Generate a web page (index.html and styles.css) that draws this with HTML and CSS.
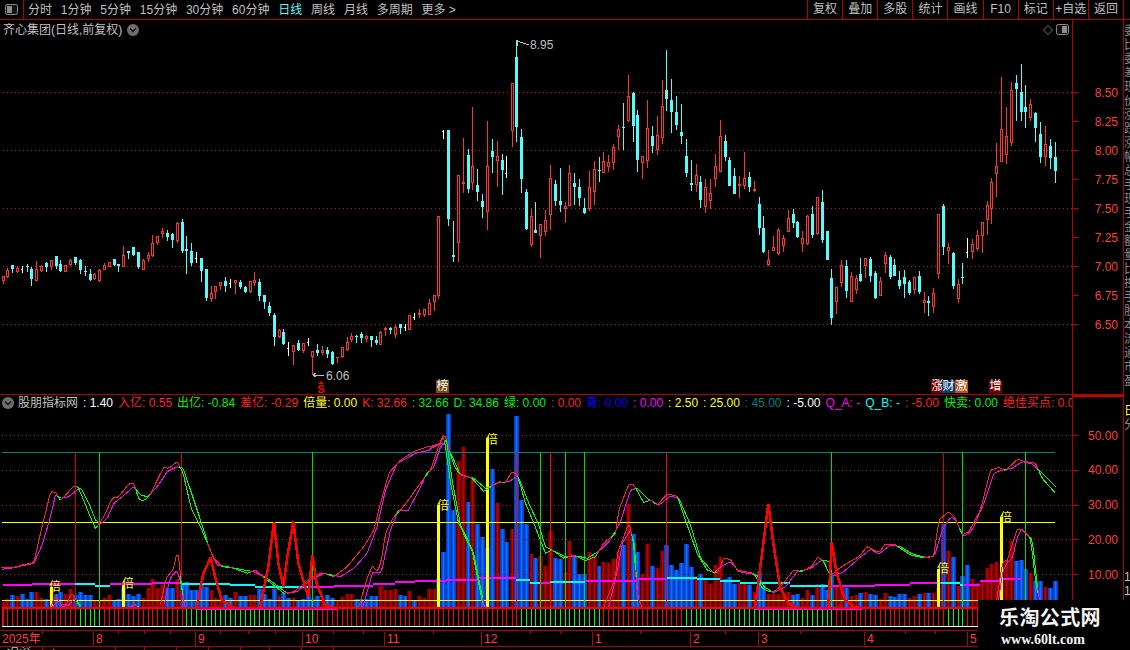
FILE: index.html
```html
<!DOCTYPE html>
<html lang="zh-CN">
<head>
  <meta charset="UTF-8">
  <title>齐心集团 日线</title>
  <link rel="stylesheet" href="styles.css">
</head>
<body>
  <div class="toolbar">
    <div class="layout-btn">
      <svg class="panel-icon" width="13" height="11" viewBox="0 0 13 11">
        <rect x="0.5" y="0.5" width="12" height="10" rx="2" fill="#111" stroke="#8c8c8c"/>
        <rect x="2" y="2" width="5" height="7" fill="#8c8c8c"/>
      </svg>
    </div>
    <div class="periods">
      <span>分时</span>
      <span>1分钟</span>
      <span>5分钟</span>
      <span>15分钟</span>
      <span>30分钟</span>
      <span>60分钟</span>
      <span class="active">日线</span>
      <span>周线</span>
      <span>月线</span>
      <span>多周期</span>
      <span>更多 &gt;</span>
    </div>
    <div class="tools">
      <span>复权</span>
      <span>叠加</span>
      <span>多股</span>
      <span>统计</span>
      <span>画线</span>
      <span>F10</span>
      <span>标记</span>
      <span>+自选</span>
      <span>返回</span>
    </div>
  </div>

  <div class="workspace">
    <div class="charts">
      <div class="pane pane-price">
        <div class="chart-area">
          <svg id="priceChart" class="chart" width="1072" height="374" viewBox="0 20 1072 374"></svg>
          <div class="pane-title">
            <span>齐心集团(日线,前复权)</span>
            <svg class="ball" width="12" height="12" viewBox="0 0 12 12">
              <circle cx="6" cy="6" r="6" fill="#6e6e6e"/>
              <path d="M3 4.5 L6 7.5 L9 4.5" fill="none" stroke="#111" stroke-width="1.3"/>
            </svg>
          </div>
          <div class="pane-icons">
            <svg width="10" height="10" viewBox="0 0 10 10">
              <path d="M5 0.5 L9.5 5 L5 9.5 L0.5 5 Z" fill="none" stroke="#6e6e6e"/>
            </svg>
            <svg width="13" height="11" viewBox="0 0 13 11">
              <rect x="0.5" y="0.5" width="12" height="10" rx="2" fill="#111" stroke="#8c8c8c"/>
              <rect x="6" y="2" width="5" height="7" fill="#8c8c8c"/>
            </svg>
          </div>
          <div id="priceMarks"></div>
        </div>
        <div id="priceAxis" class="axis"></div>
      </div>

      <div class="pane pane-indicator">
        <div class="chart-area">
          <svg id="indicatorChart" class="chart" width="1072" height="235" viewBox="0 395 1072 235"></svg>
          <div class="legend">
            <svg class="ball" width="12" height="12" viewBox="0 0 12 12">
              <circle cx="6" cy="6" r="6" fill="#6e6e6e"/>
              <path d="M3 4.5 L6 7.5 L9 4.5" fill="none" stroke="#111" stroke-width="1.3"/>
            </svg>
            <span class="c-grey">股朋指标网</span>
            <span class="c-white">: 1.40</span>
            <span class="c-red">入亿: 0.55</span>
            <span class="c-green">出亿: -0.84</span>
            <span class="c-red">差亿: -0.29</span>
            <span class="c-yellow">倍量: 0.00</span>
            <span class="c-red">K: 32.66</span>
            <span class="c-green">: 32.66</span>
            <span class="c-green">D: 34.86</span>
            <span class="c-green">绿: 0.00</span>
            <span class="c-red">: 0.00</span>
            <span class="c-blue">青: 0.00</span>
            <span class="c-magenta">: 0.00</span>
            <span class="c-yellow">: 2.50</span>
            <span class="c-yellow">: 25.00</span>
            <span class="c-teal">: 45.00</span>
            <span class="c-white">: -5.00</span>
            <span class="c-magenta">Q_A: -</span>
            <span class="c-cyan">Q_B: -</span>
            <span class="c-red">: -5.00</span>
            <span class="c-green">快卖: 0.00</span>
            <span class="c-red">绝佳买点: 0.0</span>
          </div>
          <div id="indicatorMarks"></div>
        </div>
        <div id="indicatorAxis" class="axis"></div>
      </div>

      <div id="timeAxis" class="time-axis"></div>

      <div class="status-row">
        <span class="cell-a">沪深</span>
        <span class="cell-b">+</span>
        <span class="cell-c"></span>
        <span class="cell-d"></span>
        <span class="cell-d"></span>
        <span class="cell-d"></span>
        <span class="cell-c"></span>
        <span class="cell-d"></span>
        <span class="cell-d"></span>
      </div>
    </div>

    <div class="side-strip">
      <div class="side-text">委比委差现价涨跌涨幅总手现手金额量比换手股本流通市盈</div>
      <div class="side-low"><span class="c-yellow">日</span><br>分</div>
      <div class="side-tail">1<br>1</div>
    </div>
  </div>

  <div class="watermark">
    <div class="wm-name">乐淘公式网</div>
    <div class="wm-url">www.60lt.com</div>
  </div>

  <script src="charts.js"></script>
</body>
</html>
```

FILE: styles.css
```css
* {
  margin: 0;
  padding: 0;
  box-sizing: border-box;
}

:root {
  --line: #b00000;
  --axis-text: #ff3c3c;
  --text: #c0c0c0;
}

body {
  position: relative;
  width: 1130px;
  height: 650px;
  overflow: hidden;
  background: #000;
  color: var(--text);
  font-family: "Liberation Sans", "Noto Sans CJK SC", sans-serif;
  font-size: 12px;
  line-height: 14px;
}

.toolbar {
  display: flex;
  align-items: center;
  height: 20px;
  border-bottom: 1px solid var(--line);
}

.layout-btn {
  display: flex;
  align-items: center;
  justify-content: center;
  width: 24px;
  height: 19px;
  border-right: 1px solid var(--line);
}

.periods {
  display: flex;
  gap: 8.8px;
  margin-left: 4px;
  white-space: nowrap;
}

.periods .active {
  color: #54fcfc;
}

.tools {
  display: flex;
  width: 317px;
  height: 19px;
  margin-left: auto;
  margin-right: 6px;
  border-right: 1px solid var(--line);
}

.tools span {
  flex: 1;
  line-height: 18px;
  text-align: center;
  white-space: nowrap;
  border-left: 1px solid var(--line);
}

.workspace {
  display: flex;
  height: 630px;
}

.charts {
  width: 1123px;
}

.pane {
  display: flex;
}

.pane-price {
  height: 375px;
  border-bottom: 1px solid var(--line);
}

.pane-indicator {
  height: 235px;
}

.chart-area {
  position: relative;
  width: 1073px;
  overflow: hidden;
  border-right: 1px solid var(--line);
}

.chart {
  display: block;
}

.axis {
  position: relative;
  width: 50px;
  color: var(--axis-text);
}

.pane-indicator .axis {
  border-top: 2px solid #c80000;
  margin-top: 0;
}

.axis-label {
  position: absolute;
  right: 5px;
  white-space: nowrap;
}

.axis-tick {
  position: absolute;
  left: 0;
  width: 6px;
  height: 1px;
  background: var(--line);
}

.pane-title {
  position: absolute;
  top: 3px;
  left: 3px;
  display: flex;
  align-items: center;
  gap: 5px;
}

.ball {
  flex-shrink: 0;
}

.pane-icons {
  position: absolute;
  top: 4px;
  right: 3px;
  display: flex;
  align-items: center;
  gap: 3px;
}

.legend {
  position: absolute;
  top: 1px;
  left: 2px;
  right: 0;
  display: flex;
  align-items: center;
  gap: 5px;
  overflow: hidden;
  white-space: nowrap;
}

.legend .ball {
  margin-right: -1px;
}

.legend span {
  flex-shrink: 0;
}

.c-grey { color: var(--text); }
.c-white { color: #fff; }
.c-red { color: #ff2020; }
.c-green { color: #00f000; }
.c-yellow { color: #ffff00; }
.c-blue { color: #0000ff; }
.c-magenta { color: #ff00ff; }
.c-teal { color: #008080; }
.c-cyan { color: #00ffff; }

.mark {
  position: absolute;
  width: 13px;
  height: 13px;
  line-height: 13px;
  text-align: center;
  color: #fff;
  white-space: nowrap;
}

.mark-brown { background: #7a4a10; }
.mark-darkred { background: #7a0000; }
.mark-navy { background: #0c3e72; }
.mark-orange { background: #b4561a; }

.price-note {
  position: absolute;
  color: var(--text);
  white-space: nowrap;
}

.times-mark {
  position: absolute;
  width: 12px;
  line-height: 13px;
  color: #ffff00;
}

.time-axis {
  position: relative;
  height: 17px;
  border-top: 1px solid var(--line);
  border-bottom: 1px solid var(--line);
  color: var(--axis-text);
}

.time-label {
  position: absolute;
  top: 1px;
  height: 15px;
  padding-left: 2px;
  border-left: 1px solid var(--line);
  white-space: nowrap;
}

.time-label:first-child {
  border-left: none;
}

.time-tick {
  position: absolute;
  top: 0;
  width: 1px;
  height: 3px;
  background: var(--line);
}

.status-row {
  display: flex;
  height: 4px;
  overflow: hidden;
}

.status-row span {
  padding-left: 7px;
  line-height: 11px;
  border-right: 1px solid var(--line);
  white-space: nowrap;
}

.cell-a { width: 43px; }
.cell-b { width: 73px; }
.cell-c { width: 29px; }
.cell-d { width: 32px; }

.side-strip {
  width: 7px;
  overflow: hidden;
  border-left: 1px solid var(--line);
}

.side-text {
  width: 12px;
  height: 372px;
  padding-top: 4px;
  overflow: hidden;
  color: #8c8c8c;
  line-height: 14px;
}

.side-low {
  width: 12px;
  height: 173px;
  padding-top: 12px;
  color: #8c8c8c;
}

.side-tail {
  width: 12px;
  padding-top: 5px;
  color: #c0c0c0;
}

.watermark {
  position: absolute;
  right: 0;
  bottom: 0;
  width: 152px;
  height: 50px;
  padding-top: 6px;
  background: #000;
  color: #f4f4f4;
}

.wm-name {
  margin-left: 21px;
  font-size: 20px;
  line-height: 25px;
  font-weight: 700;
  letter-spacing: 0.4px;
  white-space: nowrap;
}

.wm-url {
  margin-top: 2px;
  margin-left: 23px;
  font-family: "Liberation Serif", serif;
  font-size: 14px;
  line-height: 14px;
  font-weight: 700;
  white-space: nowrap;
}
```

FILE: charts.js
```js
// chart data is traced off the daily view, in 3x sample coordinates
const NS = 'http://www.w3.org/2000/svg';

const RED = '#ff2020';
const CANDLE_RED = '#ff3232';
const CYAN = '#54fcfc';
const GRID = '#b02020';

// [x, kind, bodyTop, bodyBottom, wickTop, wickBottom]
const CANDLES = [
  { x0: 0, y0: 210, rows: [
    [8,'r',198,213,198,221],[22,'r',180,202,173,204],[37,'c',166,177,166,188],[51,'r',175,186,167,190],
    [65,'w',176,176,167,189],[80,'c',169,171,162,186],[94,'c',177,207,170,227],[109,'r',178,212,154,212],
    [124,'r',168,184,165,187],[139,'c',158,172,155,186],[152,'r',151,171,150,179],[167,'c',139,167,139,177],
    [181,'c',162,184,150,186],[196,'r',166,185,166,185],[211,'r',151,165,147,167],[226,'c',142,158,142,165],
    [241,'c',150,180,147,192],[254,'c',182,185,168,198],[269,'c',192,211,178,214],[283,'r',192,207,188,210],
    [298,'r',180,214,178,216],[313,'r',165,179,160,180],[327,'r',157,170,155,171],[341,'c',148,165,146,168],
    [355,'c',163,167,163,186],[370,'r',136,170,108,172],[385,'c',123,128,123,146],[400,'c',112,135,110,137],
    [415,'c',126,172,126,177],[430,'r',151,179,148,180],[443,'r',136,148,126,155],[457,'r',100,137,75,140],
    [472,'r',79,100,77,106],[487,'r',64,73,54,85],[502,'c',70,80,60,93],[517,'c',72,90,70,114],
    [532,'r',39,93,37,100],[545,'c',37,123,27,128],[559,'c',118,122,78,192],[574,'c',123,160,98,168],
    [589,'w',144,144,126,158],[603,'c',145,183,145,216],[618,'c',178,265,178,272],[633,'r',250,267,228,275],
    [646,'r',229,245,228,267],[661,'r',217,229,215,240],[676,'c',213,229,201,246],[690,'w',220,220,208,234],
    [705,'r',211,218,211,252],[720,'c',216,231,211,236],[734,'c',231,245,227,249],[749,'r',214,246,212,248],
    [763,'r',210,220,186,228],[778,'c',216,258,208,273],[793,'c',256,276,256,297],[808,'c',288,308,276,318],
    [823,'c',315,380,310,408],[836,'r',361,380,358,385],[850,'c',366,402,356,405],[865,'w',415,415,397,438],
    [880,'r',405,425,405,465],[895,'c',400,420,391,422],[910,'r',400,424,400,428],[925,'w',395,395,384,407],
    [937,'r',423,440,423,495],[952,'c',421,429,403,437],[967,'r',420,430,408,436],[982,'c',421,431,412,445],
    [997,'c',427,462,424,465],[1012,'r',442,445,442,458],[1025,'r',412,442,412,444],[1040,'r',397,420,380,424],
    [1054,'r',378,390,369,395],[1069,'c',378,381,375,400],[1084,'c',372,385,367,399],[1099,'r',378,388,376,396],
    [1114,'c',379,390,379,411],[1127,'c',391,400,378,404],[1141,'r',366,404,364,405],[1156,'r',353,360,352,378],
    [1171,'c',354,360,350,373],[1186,'r',351,374,343,383],[1201,'c',343,355,343,372],[1215,'w',352,352,342,362],
    [1228,'r',316,359,314,360],[1243,'w',320,320,310,330],[1258,'r',310,314,297,323],[1273,'r',298,315,296,321],
    [1288,'r',280,314,266,316],[1303,'r',256,277,255,302]
  ] },
  { x0: 430, y0: 40, rows: [
    [25,'r',528,768,528,777],[40,'w',272,272,270,297],[55,'c',270,537,270,557],[70,'c',645,651,543,665],
    [85,'r',405,610,405,665],[100,'r',426,431,294,458],[115,'c',345,446,327,458],[127,'r',379,428,201,450],
    [142,'c',435,456,387,483],[157,'c',483,500,462,533],[172,'r',379,517,243,570],[187,'c',333,351,297,400],
    [202,'r',348,362,304,440],[217,'c',360,390,343,464],[228,'w',400,400,348,413],[245,'r',130,272,130,320],
    [259,'c',51,261,0,305],[274,'c',291,417,267,458],[289,'c',456,568,447,570],[304,'r',528,614,507,620],
    [316,'c',570,579,487,579],[331,'r',553,587,553,653],[346,'r',541,575,510,587],[361,'r',414,524,376,570],
    [376,'c',432,483,420,498],[391,'c',483,495,384,515],[406,'r',498,506,487,548],[418,'r',400,497,376,498],
    [433,'c',429,441,400,495],[448,'c',441,474,417,497],[463,'c',504,519,474,521],[478,'r',441,506,393,512],
    [493,'r',387,455,363,495],[508,'c',390,393,351,426],[520,'r',363,398,336,399],[535,'r',367,380,345,395],
    [550,'r',322,368,312,390],[565,'r',267,290,255,330],[580,'c',261,264,189,330],[595,'r',168,243,105,246],
    [610,'c',159,258,156,306],[622,'c',225,360,210,396],[637,'r',348,368,348,417],[652,'r',264,362,180,384],
    [667,'c',288,318,258,339],[682,'r',285,330,228,345],[697,'r',198,293,120,312],[709,'c',150,177,30,213],
    [724,'c',180,216,117,279],[739,'c',216,255,168,270],[754,'c',276,288,192,312],[769,'c',348,399,297,411],
    [784,'c',429,435,360,453],[799,'r',405,435,372,456],[811,'c',426,480,408,504],[826,'r',441,501,417,519],
    [841,'r',459,483,417,507],[856,'r',378,416,342,441],[871,'r',288,396,240,396],[886,'c',303,351,285,363],
    [898,'c',360,438,351,438]
  ] },
  { x0: 730, y0: 60, rows: [
    [13,'c',348,402,325,402],[28,'r',372,378,348,414],[43,'r',354,378,276,387],[58,'c',351,381,336,396],
    [73,'r',387,393,363,396],[88,'c',432,504,411,525],[100,'c',504,576,468,579],[115,'r',600,615,570,618],
    [130,'r',561,573,528,573],[145,'r',510,582,504,585],[160,'r',534,558,525,576],[175,'r',474,516,450,516],
    [190,'c',462,489,447,504],[202,'c',486,531,483,534],[217,'r',534,552,513,576],[232,'r',468,552,465,555],
    [247,'c',462,525,438,534],[262,'r',411,522,411,525],[277,'c',426,540,390,549],[292,'c',513,600,513,600],
    [304,'c',654,774,627,795],[319,'r',681,726,681,762],[334,'r',615,669,600,681],[349,'c',618,693,600,714],
    [364,'r',648,726,636,726],[379,'r',654,690,645,702],[391,'c',642,663,594,666],[406,'r',594,618,594,654],
    [421,'c',597,648,591,666],[436,'c',639,714,633,717],[451,'r',663,708,651,708],[466,'r',585,612,576,639],
    [481,'c',591,651,585,657],[493,'c',615,648,597,648],[508,'c',660,678,633,687],[523,'c',651,672,630,714],
    [538,'c',666,699,660,705],[553,'r',651,690,651,702],[568,'c',648,696,633,702],[583,'r',720,729,696,759],
    [595,'c',723,729,708,768],[610,'r',699,741,684,759],[625,'r',462,642,462,657],[640,'c',438,561,432,585],
    [655,'r',561,573,549,612],[670,'c',579,678,576,687],[685,'r',672,717,657,729],[697,'c',651,654,609,672],
    [712,'w',576,576,534,594],[727,'r',552,576,537,597],[742,'r',525,567,510,573],[757,'r',486,527,486,579],
    [772,'r',435,480,423,525],[784,'r',366,448,354,492],[799,'r',318,342,249,411],[814,'r',207,306,51,306],
    [829,'r',228,285,141,312],[844,'r',90,249,66,258],[859,'c',69,87,45,183],[874,'c',96,156,12,183],
    [886,'c',141,156,75,204],[901,'r',132,174,117,183],[916,'c',159,204,156,246],[931,'c',222,291,186,309],
    [946,'r',252,291,198,318],[961,'c',258,294,237,327],[976,'c',291,333,246,369]
  ] }
];

// one bar per candle: colour + height in px
const BARS = ('r6 r9 b13 r12 b14 b9 b16 r16 r10 b9 r18 b14 b16 r14 r19 b13 b16 b13 b13 r8 ' +
  'r7 r10 r13 b8 b9 b20 b14 b12 b14 r10 r20 r29 r20 r23 b20 b20 r29 b25 b26 b18 ' +
  'b18 b24 b21 r18 r10 r9 b13 b10 r16 b12 b12 r13 r13 b19 b14 b9 b19 r12 b15 b10 ' +
  'r10 b8 b9 b14 b9 b12 r9 b13 b10 r8 r11 r14 r14 b9 b9 b9 b12 b12 r22 r18 ' +
  'r18 r19 b13 b12 r17 b8 r12 r10 r19 r19 b30 b56 b194 b98 r147 r161 b106 r128 b84 b71 ' +
  'b60 b139 r105 b79 b66 r79 b192 b108 b84 r54 b50 r52 r42 r77 b50 b49 r36 r67 b51 b34 ' +
  'b34 r56 r53 b42 r46 r45 r49 r57 b63 r104 b74 b56 r34 r64 b42 r40 r57 b63 b43 b38 ' +
  'b45 b64 b41 r32 b34 r30 r24 r43 r51 b29 b31 b24 r25 r24 b23 r16 b36 b23 r14 r14 ' +
  'r14 r12 r16 b13 b14 r10 r18 b13 r24 b24 b18 b33 r22 r23 b20 r12 r13 b15 r16 b14 ' +
  'b13 r9 r15 b12 b11 b14 b14 r10 r12 b14 r15 b15 r15 r20 b84 r57 b51 r22 b32 b43 ' +
  'r29 r25 r26 r40 r44 r46 r30 r47 r67 b47 b48 b39 r35 b27 b27 r21 b20 b27').split(' ');

const TIMES_BARS = [
  { index: 10, top: 587, noteX: 49, noteY: 581 },
  { index: 25, top: 585, noteX: 122, noteY: 578 },
  { index: 90, top: 505, noteX: 437, noteY: 500 },
  { index: 100, top: 438, noteX: 486, noteY: 434 },
  { index: 193, top: 569, noteX: 937, noteY: 563 },
  { index: 206, top: 517, noteX: 1000, noteY: 512 }
];

const SIGNALS = [
  [75, '#d80000'], [99, '#00e000'], [181, '#d80000'], [312, '#00e000'],
  [516, '#ff0000'], [540, '#00e000'], [550, '#ff0000'], [565, '#00e000'],
  [584, '#00e000'], [666, '#ff0000'], [831, '#00e000'], [943, '#d80000'],
  [962, '#00e000'], [1025, '#00e000']
];

const GREEN_STICKS = [[78, 102], [184, 312], [520, 600], [684, 832], [945, 963]];

// thick moving line, [colour, from, to, y]
const MA = [
  ['m',3,32,585],['m',32,75,584],['c',75,95,584],['c',95,110,585.5],['m',110,152,584],['m',152,182,583],
  ['c',182,230,583.5],['c',230,255,585],['c',255,308,586.5],['m',308,334,586.5],['m',334,373,585.5],
  ['m',373,395,584],['m',395,415,582],['m',415,446,581],['m',446,478,580],['m',478,516,578],
  ['c',516,530,580],['c',530,540,583],['m',540,550,582.5],['c',550,585,582],['m',585,637,581],
  ['m',637,667,579],['c',667,697,578],['c',697,720,579],['c',720,740,581],['c',740,790,583],
  ['c',790,830,585.5],['m',830,875,586],['m',875,910,585],['m',910,941,583],['c',941,960,583],
  ['c',960,963,584.5],['m',963,980,584.5],['m',980,1000,581],['m',1000,1021,579]
];

const trace = (x0, y0, pts) => pts.map(([x, y]) => [x0 + x / 3, y0 + y / 3]);

const UPPER_K = [
  ...trace(0, 430, [[3,412],[35,414],[65,405],[100,398],[120,310],[135,250],[150,185],[165,187],[180,212],[200,190],[220,168],[232,170],[245,200],[265,250],[285,296],[310,260],[335,205],[355,200],[385,162],[400,160],[415,208],[430,212],[450,195],[470,150],[490,112],[505,115],[530,95],[548,130],[572,235],[600,290],[640,385],[665,410],[700,415],[740,430],[765,420],[800,450],[850,490],[880,485],[930,445],[965,428],[1000,440],[1040,410],[1090,350],[1120,300],[1140,220],[1165,130],[1200,90],[1245,62],[1290,48]]),
  ...trace(430, 410, [[0,110],[30,100],[42,70],[55,115],[70,165],[85,190],[125,205],[160,245],[175,235],[205,215],[225,218],[245,183],[262,198],[285,280],[310,340],[345,430],[365,420],[400,445],[430,435],[465,452],[495,440],[520,400],[555,370],[565,300],[595,222],[610,225],[640,278],[660,270],[680,285],[710,252],[740,258],[770,345],[800,430],[830,480],[860,490],[880,445]]),
  ...trace(730, 430, [[0,388],[20,420],[70,430],[95,475],[125,488],[150,470],[190,420],[215,425],[245,408],[262,380],[280,395],[300,440],[320,420],[350,400],[385,380],[410,350],[425,358],[445,368],[465,342],[495,345],[540,375],[580,383],[610,378],[625,270],[655,245],[675,265],[695,315],[715,305],[750,240],[780,120],[805,112],[825,122],[860,88],[885,95],[915,100],[935,145],[975,190]])
];

const UPPER_D = [
  ...trace(0, 430, [[3,418],[30,415],[100,400],[125,345],[150,260],[165,195],[180,205],[205,200],[240,172],[265,220],[285,270],[300,282],[320,265],[340,220],[365,200],[400,170],[420,195],[440,200],[470,170],[500,125],[530,110],[548,115],[570,180],[600,270],[630,365],[650,405],[690,412],[720,418],[760,425],[800,445],[860,490],[890,485],[930,450],[970,430],[1020,440],[1060,415],[1100,370],[1130,290],[1155,180],[1190,100],[1245,70],[1290,60]]),
  ...trace(430, 410, [[0,115],[35,100],[50,110],[70,150],[90,195],[130,205],[165,235],[205,218],[235,215],[262,198],[295,280],[325,345],[345,410],[365,420],[405,440],[440,438],[470,445],[510,420],[540,390],[570,335],[600,240],[620,235],[650,265],[685,285],[720,258],[745,265],[780,345],[810,445],[850,490],[870,470]]),
  ...trace(730, 430, [[0,395],[25,425],[80,435],[100,470],[130,488],[165,470],[200,425],[240,415],[275,390],[298,395],[305,440],[340,425],[385,385],[420,358],[445,372],[480,345],[510,350],[545,372],[590,383],[612,378],[635,300],[660,262],[672,265],[700,320],[725,300],[760,220],[790,130],[815,120],[845,115],[875,95],[905,102],[930,125],[975,170]])
];

// lower pair only shows while it is above the floor line
const LOWER_PAIRS = [
  [trace(0, 430, [[150,533],[165,495],[182,525],[200,522],[213,488],[240,533]]),
   trace(0, 430, [[155,533],[172,510],[185,530],[205,525],[222,505],[245,533]])],
  [trace(0, 430, [[385,533],[400,520],[415,533]]),
   trace(0, 430, [[390,533],[403,524],[418,533]])],
  [trace(0, 430, [[478,533],[497,445],[520,415],[532,355],[545,490],[555,533]]),
   trace(0, 430, [[490,533],[500,480],[512,438],[530,422],[545,470],[552,533]])],
  [[[358,608],[367,577],[372,566],[377,572],[381,560],[385,533],[393,517],[400,510],[408,500],[417,487],[430,470],[438,447],[443,434],[450,482],[458,523],[472,552],[483,608]],
   [[362,608],[372,573],[381,572],[385,553],[390,530],[398,510],[408,510],[417,493],[427,472],[433,468],[440,447],[446,440],[452,482],[460,525],[473,552],[484,608]]],
  [[[603,608],[615,577],[617,553],[627,527],[629,525],[633,543],[637,597],[642,608]],
   [[608,608],[617,570],[622,543],[630,530],[634,545],[637,598],[642,608]]],
  [[[995,608],[1002,562],[1007,560],[1012,543],[1017,529],[1022,529],[1030,538],[1035,580],[1038,600]],
   [[997,608],[1002,572],[1007,562],[1012,558],[1017,537],[1021,529],[1032,540],[1036,580],[1039,600]]]
];

const SPIKES = [
  trace(0, 430, [[590,533],[610,430],[632,383],[645,440],[665,510],[700,533]]),
  trace(0, 430, [[780,533],[795,460],[805,410],[822,275],[835,400],[850,470],[862,380],[880,275],[895,400],[915,470],[925,500],[937,376],[950,460],[975,525],[1010,535]]),
  trace(730, 430, [[75,533],[95,380],[115,222],[130,340],[150,470],[175,520],[205,533]]),
  trace(730, 430, [[295,533],[305,337],[320,430],[345,510],[370,530],[395,533]])
];

const PRICE_TICKS = [8.5, 8.25, 8, 7.75, 7.5, 7.25, 7, 6.75, 6.5];
const INDICATOR_TICKS = [50, 40, 30, 20, 10];
const priceY = p => 92.5 + (8.5 - p) * 116;
const indicatorY = v => 574.5 + (10 - v) * 3.47;

const MONTHS = [
  ['2025年', 0], ['8', 93], ['9', 195], ['10', 302], ['11', 384], ['12', 481],
  ['1', 592], ['2', 690], ['3', 758], ['4', 864], ['5', 967]
];
const TIME_TICKS = [42, 118, 144, 170, 220, 248, 275, 333, 363, 433, 530, 560, 640, 725, 800, 905, 935];

function add(parent, name, attrs) {
  const node = document.createElementNS(NS, name);
  for (const key in attrs) node.setAttribute(key, attrs[key]);
  parent.appendChild(node);
  return node;
}

function box(parent, x, y, w, h, fill) {
  return add(parent, 'rect', { x, y, width: w, height: h, fill, 'shape-rendering': 'crispEdges' });
}

function line(parent, pts, color, width) {
  return add(parent, 'polyline', {
    points: pts.map(p => p.join(',')).join(' '),
    fill: 'none',
    stroke: color,
    'stroke-width': width || 1,
    'stroke-linejoin': 'bevel',
    'shape-rendering': 'crispEdges'
  });
}

function dotted(parent, y, x1, x2) {
  add(parent, 'line', {
    x1, x2, y1: y, y2: y,
    stroke: GRID,
    'stroke-dasharray': '1 3',
    'shape-rendering': 'crispEdges'
  });
}

function note(host, className, text, left, top) {
  const span = document.createElement('span');
  span.className = className;
  span.textContent = text;
  span.style.left = left + 'px';
  span.style.top = top + 'px';
  host.appendChild(span);
}

// flatten the traced sections into one list, page coordinates
const candles = [];
CANDLES.forEach(s => s.rows.forEach(([x, kind, t, b, wt, wb]) => {
  candles.push({
    x: Math.round(s.x0 + x / 3),
    kind,
    top: Math.round(s.y0 + t / 3),
    bottom: Math.round(s.y0 + b / 3),
    wickTop: Math.round(s.y0 + wt / 3),
    wickBottom: Math.round(s.y0 + wb / 3)
  });
}));

function drawPrice() {
  const svg = document.getElementById('priceChart');
  [8.5, 8, 7.5, 7, 6.5].forEach(p => dotted(svg, Math.floor(priceY(p)) + 0.5, 3, 1072));

  candles.forEach(c => {
    const h = Math.max(c.bottom - c.top, 1);
    if (c.kind === 'w') {
      box(svg, c.x, c.wickTop, 1, c.wickBottom - c.wickTop, '#fff');
      box(svg, c.x - 1, c.top, 1, 1, '#fff');
    } else if (c.kind === 'c') {
      box(svg, c.x, c.wickTop, 1, c.wickBottom - c.wickTop, CYAN);
      box(svg, c.x - 1, c.top, 3, h, CYAN);
    } else {
      box(svg, c.x, c.wickTop, 1, c.wickBottom - c.wickTop, CANDLE_RED);
      box(svg, c.x - 1, c.top, 3, h, CANDLE_RED);
      if (h > 2) box(svg, c.x, c.top + 1, 1, h - 2, '#000');
    }
  });

  // high / low notes
  line(svg, [[517, 41], [523, 43], [529, 45]], '#c0c0c0');
  line(svg, [[517, 40], [517, 46]], '#c0c0c0');
  line(svg, [[313, 375], [324, 375]], '#c0c0c0');
  line(svg, [[316, 373], [313, 375], [316, 377]], '#c0c0c0');

  // buy mark under the low
  add(svg, 'path', { d: 'M321 381 L324 384 L318 384 Z', fill: '#ff0000' });
  const s = add(svg, 'text', {
    x: 321, y: 393, fill: '#ff0000', 'text-anchor': 'middle',
    'font-size': 11, 'font-weight': 700, 'font-family': 'Liberation Sans'
  });
  s.textContent = 'S';

  const marks = document.getElementById('priceMarks');
  note(marks, 'price-note', '8.95', 530, 18);
  note(marks, 'price-note', '6.06', 326, 349);
  note(marks, 'mark mark-brown', '榜', 436, 360);
  note(marks, 'mark mark-darkred', '涨', 931, 360);
  note(marks, 'mark mark-navy', '财', 942, 360);
  note(marks, 'mark mark-orange', '激', 955, 360);
  note(marks, 'mark mark-darkred', '增', 989, 360);
}

function gradients(svg) {
  const defs = add(svg, 'defs', {});
  const make = (id, edge, mid) => {
    const g = add(defs, 'linearGradient', { id, x1: 0, x2: 1, y1: 0, y2: 0 });
    add(g, 'stop', { offset: '0%', 'stop-color': edge });
    add(g, 'stop', { offset: '50%', 'stop-color': mid });
    add(g, 'stop', { offset: '100%', 'stop-color': edge });
  };
  make('barBlue', '#0030c0', '#0a70ff');
  make('barRed', '#480000', '#c00000');
}

function interp(pts, x) {
  if (x < pts[0][0] || x > pts[pts.length - 1][0]) return null;
  for (let i = 1; i < pts.length; i++) {
    if (x <= pts[i][0]) {
      const [x1, y1] = pts[i - 1];
      const [x2, y2] = pts[i];
      return x2 === x1 ? y2 : y1 + (y2 - y1) * (x - x1) / (x2 - x1);
    }
  }
  return null;
}

function drawCrossLine(svg, own, other, upColor, floor) {
  let run = [];
  let runColor = null;
  const flush = () => {
    if (run.length > 1) line(svg, run, runColor);
    run = [];
  };
  for (let x = Math.ceil(own[0][0]); x <= own[own.length - 1][0]; x += 2) {
    const y = interp(own, x);
    if (y === null) continue;
    const o = interp(other, x);
    const up = o === null || (upColor === RED ? y <= o + 0.5 : y >= o - 0.5);
    const color = up ? upColor : '#00ff00';
    if (color !== runColor) {
      const last = run[run.length - 1];
      flush();
      if (last) run.push(last);
      runColor = color;
    }
    run.push([x + 0.5, Math.min(y, floor)]);
  }
  flush();
}

function drawIndicator() {
  const svg = document.getElementById('indicatorChart');
  gradients(svg);

  BARS.forEach((b, i) => {
    const c = candles[i];
    const h = Number(b.slice(1));
    box(svg, c.x - 2, 608 - h, 5, h, b[0] === 'b' ? 'url(#barBlue)' : 'url(#barRed)');
  });

  INDICATOR_TICKS.forEach(v => dotted(svg, Math.floor(indicatorY(v)) + 0.5, 2, 1072));

  box(svg, 2, 452, 1053, 1, '#008080');
  box(svg, 2, 522, 1053, 1, '#ffff00');
  box(svg, 2, 600, 1053, 1, '#ffff00');

  SIGNALS.forEach(([x, color]) => box(svg, x, 452, 1, 156, color));

  candles.forEach(c => {
    if (c.x > 978) return;
    const green = GREEN_STICKS.some(([a, b]) => c.x >= a && c.x <= b);
    box(svg, c.x, 609, 1, 17, green ? '#00ff00' : '#ff0000');
  });
  box(svg, 2, 609, 1, 17, '#ff0000');
  box(svg, 2, 626, 976, 1, '#fff');

  MA.forEach(([color, a, b, y]) => {
    box(svg, a, Math.round(y) - 1, b - a, 2, color === 'm' ? '#ff00ff' : '#00ffff');
  });

  TIMES_BARS.forEach(b => box(svg, candles[b.index].x - 1, b.top, 3, 607 - b.top, '#ffff00'));

  drawCrossLine(svg, UPPER_D, UPPER_K, '#ff00ff', 608);
  drawCrossLine(svg, UPPER_K, UPPER_D, RED, 608);
  LOWER_PAIRS.forEach(([k, d]) => {
    drawCrossLine(svg, d, k, '#ff00ff', 608);
    drawCrossLine(svg, k, d, RED, 608);
  });

  SPIKES.forEach(pts => line(svg, pts, '#ff0000', 2.5));

  box(svg, 2, 607, 976, 2, '#ff0000');
  box(svg, 197, 609, 140, 1, '#ff00ff');
  box(svg, 755, 609, 107, 1, '#ff00ff');

  const marks = document.getElementById('indicatorMarks');
  TIMES_BARS.forEach(b => note(marks, 'times-mark', '倍', b.noteX, b.noteY - 395));
}

function drawAxes() {
  const priceAxis = document.getElementById('priceAxis');
  PRICE_TICKS.forEach(p => {
    const y = priceY(p) - 20;
    note(priceAxis, 'axis-tick', '', 0, Math.floor(y));
    note(priceAxis, 'axis-label', p.toFixed(2), undefined, y - 7);
  });

  const indicatorAxis = document.getElementById('indicatorAxis');
  INDICATOR_TICKS.forEach(v => {
    const y = indicatorY(v) - 397;
    note(indicatorAxis, 'axis-tick', '', 0, Math.floor(y));
    note(indicatorAxis, 'axis-label', v.toFixed(2), undefined, y - 7);
  });

  const timeAxis = document.getElementById('timeAxis');
  MONTHS.forEach(([text, x]) => note(timeAxis, 'time-label', text, x, 1));
  TIME_TICKS.forEach(x => note(timeAxis, 'time-tick', '', x, 0));
}

drawPrice();
drawIndicator();
drawAxes();
```
